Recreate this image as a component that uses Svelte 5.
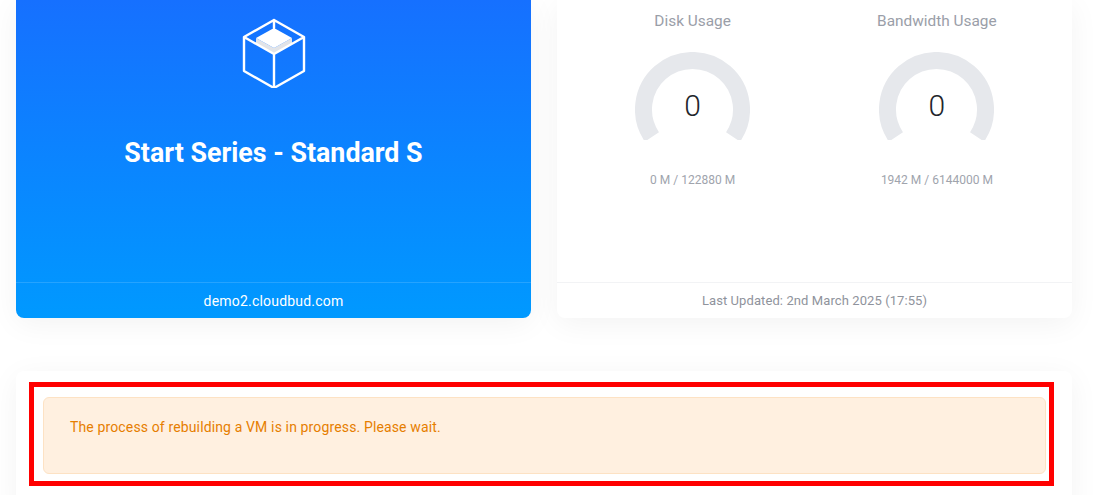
<script>
	const gauges = [
		{ title: 'Disk Usage', value: 0, detail: '0 M / 122880 M' },
		{ title: 'Bandwidth Usage', value: 0, detail: '1942 M / 6144000 M' }
	];
</script>

<main class="page">
	<div class="top">
		<section class="plan">
			<div class="plan-body">
				<svg class="cube" width="64" height="72" viewBox="0 0 64 72" aria-hidden="true">
					<path d="M14 22 14 28 32 38 50 28 50 22 32 32Z" fill="#e2e4e8" />
					<path d="M32 12 50 22 32 32 14 22Z" fill="#fff" />
					<path
						d="M32 4 62 21 62 55 32 72 2 55 2 21ZM2 21 32 38 62 21M32 38V72M32 4V12"
						fill="none"
						stroke="#fff"
						stroke-width="2.4"
						stroke-linejoin="round"
						stroke-linecap="round"
					/>
				</svg>
				<h2>Start Series - Standard S</h2>
			</div>
			<div class="plan-foot">demo2.cloudbud.com</div>
		</section>

		<section class="card usage">
			<div class="gauges">
				{#each gauges as g}
					<div class="gauge">
						<h3>{g.title}</h3>
						<div class="dial">
							<svg width="115" height="88" viewBox="0 0 115 88" aria-hidden="true">
								<path d="M16.9 84.9A49 49 0 1 1 98.1 84.9" fill="none" stroke="#e6e8ec" stroke-width="17" />
							</svg>
							<span class="value">{g.value}</span>
						</div>
						<p>{g.detail}</p>
					</div>
				{/each}
			</div>
			<div class="usage-foot">Last Updated: 2nd March 2025 (17:55)</div>
		</section>
	</div>

	<section class="card status">
		<div class="alert">
			<span class="highlight"></span>
			The process of rebuilding a VM is in progress. Please wait.
		</div>
	</section>
</main>

<style>
	:global(body) {
		margin: 0;
		background: #fff;
		font-family: Roboto, "Liberation Sans", sans-serif;
		overflow: hidden;
	}
	.page {
		box-sizing: border-box;
		width: 1098px;
		height: 495px;
		padding: 0 26px 0 16px;
		overflow: hidden;
	}
	.top {
		display: grid;
		grid-template-columns: 515px 515px;
		gap: 26px;
		height: 318px;
	}
	.plan {
		display: flex;
		flex-direction: column;
		border-radius: 0 0 8px 8px;
		background: linear-gradient(180deg, #1670ff 0%, #0099ff 100%);
		box-shadow: 0 6px 30px rgba(0, 0, 0, .05);
		color: #fff;
	}
	.plan-body {
		flex: 1;
		display: flex;
		flex-direction: column;
		align-items: center;
		padding-top: 16px;
	}
	.cube {
		display: block;
	}
	h2 {
		margin: 49px 0 0;
		font-size: 26.8px;
		font-weight: 700;
		line-height: 32px;
	}
	.plan-foot {
		height: 35px;
		border-top: 1px solid rgba(255, 255, 255, .14);
		font-size: 14px;
		line-height: 36px;
		text-align: center;
		letter-spacing: .2px;
	}
	.card {
		border-radius: 8px;
		background: #fff;
		box-shadow: 0 6px 30px rgba(0, 0, 0, .05);
	}
	.usage {
		display: flex;
		flex-direction: column;
		border-radius: 0 0 8px 8px;
	}
	.gauges {
		flex: 1;
		display: grid;
		grid-template-columns: 1fr 1fr;
		padding: 0 13px 0 13.5px;
	}
	.gauge {
		display: flex;
		flex-direction: column;
		align-items: center;
	}
	h3 {
		margin: 12px 0 0;
		color: #9a9ea8;
		font-size: 15.4px;
		font-weight: 400;
		line-height: 18px;
	}
	.dial {
		position: relative;
		height: 88px;
		margin-top: 22px;
	}
	.dial svg {
		display: block;
	}
	.value {
		position: absolute;
		left: 0;
		right: 0;
		top: 36px;
		color: #22252b;
		font-size: 30px;
		font-weight: 300;
		line-height: 36px;
		text-align: center;
	}
	.gauge p {
		margin: 32px 0 0;
		color: #a0a4ad;
		font-size: 12px;
		line-height: 16px;
	}
	.usage-foot {
		height: 35px;
		border-top: 1px solid #f2f3f5;
		color: #8f939c;
		font-size: 13px;
		line-height: 36px;
		text-align: center;
		letter-spacing: .09px;
	}
	.status {
		margin-top: 53px;
		padding: 26px 26px 40px 27px;
	}
	.alert {
		position: relative;
		box-sizing: border-box;
		height: 77px;
		padding: 21px 26px;
		border: 1px solid #fde2c4;
		border-radius: 6px;
		background: #fff0e0;
		color: #e67e00;
		font-size: 14px;
		line-height: 17px;
		letter-spacing: .135px;
	}
	.highlight {
		position: absolute;
		left: -15px;
		right: -9px;
		top: -16px;
		bottom: -13px;
		border: 5px solid #f00;
	}
</style>
